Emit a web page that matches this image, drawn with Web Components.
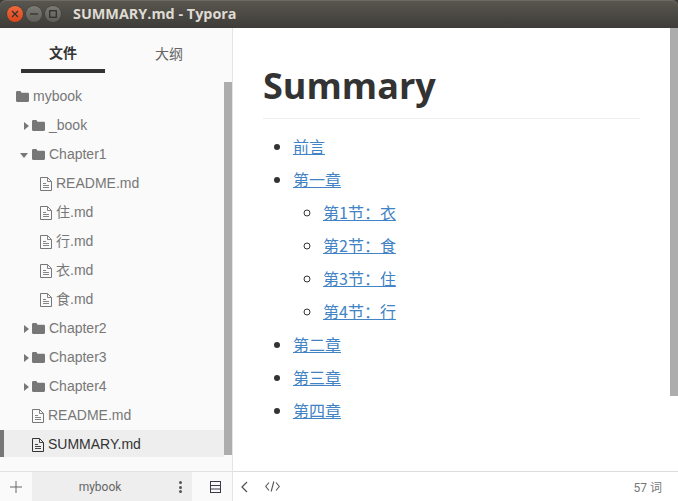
<!DOCTYPE html>
<html><head><meta charset="utf-8">
<style>
html,body{margin:0;height:100%;background:#3c3b37;overflow:hidden}
body{display:flex;flex-direction:column;width:678px;height:501px;font-family:"Liberation Sans","Noto Sans CJK SC",sans-serif}
</style></head>
<body>
<win-titlebar>SUMMARY.md - Typora</win-titlebar>
<app-main>
  <file-sidebar slot="side">
    <tree-row level="0" icon="folder">mybook</tree-row>
    <tree-row level="1" icon="folder" arrow="right">_book</tree-row>
    <tree-row level="1" icon="folder" arrow="down">Chapter1</tree-row>
    <tree-row level="2" icon="file">README.md</tree-row>
    <tree-row level="2" icon="file">住.md</tree-row>
    <tree-row level="2" icon="file">行.md</tree-row>
    <tree-row level="2" icon="file">衣.md</tree-row>
    <tree-row level="2" icon="file">食.md</tree-row>
    <tree-row level="1" icon="folder" arrow="right">Chapter2</tree-row>
    <tree-row level="1" icon="folder" arrow="right">Chapter3</tree-row>
    <tree-row level="1" icon="folder" arrow="right">Chapter4</tree-row>
    <tree-row level="1" icon="file">README.md</tree-row>
    <tree-row level="1" icon="file" active>SUMMARY.md</tree-row>
  </file-sidebar>
  <md-doc slot="doc"></md-doc>
</app-main>
<script>
function def(name, css, html, init){
  customElements.define(name, class extends HTMLElement{
    connectedCallback(){
      if(this.shadowRoot) return;
      const r=this.attachShadow({mode:'open'});
      r.innerHTML='<style>'+css+'</style>'+(typeof html==='function'?html(this):html);
    }
  });
}
def('win-titlebar',`
:host{display:flex;align-items:center;height:28px;flex:none;box-sizing:border-box;padding-left:7px;border-radius:6px 6px 0 0;
background:linear-gradient(#5a5750,#3d3c38);color:#dfdbd2;font:700 14.4px/28px "Open Sans",sans-serif;box-shadow:inset 0 1px 0 #6d6a63}
.b{width:16px;height:16px;border-radius:50%;margin-right:3px;display:flex;align-items:center;justify-content:center;background:linear-gradient(#7b7a74,#5f5e58);box-shadow:0 0 0 .5px #3a3935}
.c{background:linear-gradient(#f0693c,#d9451b)}
svg{width:8px;height:8px;fill:none;stroke:#33322e;stroke-width:1.3}
.t{margin-left:9px;white-space:nowrap}`,
`<div class="b c"><svg viewBox="0 0 8 8"><path d="M1 1l6 6M7 1L1 7"/></svg></div>
<div class="b"><svg viewBox="0 0 8 8"><path d="M0 4h8"/></svg></div>
<div class="b"><svg viewBox="0 0 8 8"><rect x=".7" y=".7" width="6.6" height="6.6"/></svg></div>
<div class="t"><slot></slot></div>`);

def('app-main',`
:host{display:flex;flex:1;min-height:0;background:#fff}`,
`<slot name="side"></slot><slot name="doc"></slot>`);

def('file-sidebar',`
:host{display:flex;flex-direction:column;position:relative;width:232px;flex:none;background:#fafafa;border-right:1px solid #e4e4e4;color:#777}
.tabs{display:flex;height:54px;box-sizing:border-box;padding-left:21px;flex:none}
.tab{width:84px;height:45px;box-sizing:border-box;display:flex;align-items:center;justify-content:center;padding-top:7px;font:14px "Noto Sans CJK SC",sans-serif;color:#666}
.tab.on{font-weight:700;color:#333;border-bottom:4px solid #333;padding-top:7px}
.tab+.tab{margin-left:22px;padding-top:6px;padding-bottom:1px}
.tree{flex:1;display:flex;flex-direction:column;gap:2px;min-height:0}
.sb{position:absolute;right:0;top:54px;width:8px;height:373px;background:#adadad}
.foot{display:flex;height:30px;box-sizing:border-box;flex:none;border-top:1px solid #e2e2e2;align-items:stretch;background:#fafafa}
.add{width:32px;display:flex;align-items:center;justify-content:center}
.name{width:160px;background:#eee;display:flex;align-items:center;position:relative;justify-content:center;font:12px "Roboto",sans-serif;color:#666;padding-right:24px;box-sizing:border-box}
.dots{position:absolute;right:10px;top:9px;width:4px;height:12px;display:flex;flex-direction:column;justify-content:space-between;align-items:center}
.dots i{width:3px;height:3px;border-radius:50%;background:#555;display:block;flex:none}
.list{flex:1;display:flex;align-items:center;justify-content:center;padding-left:6px}
svg{display:block}`,
`<div class="tabs"><div class="tab on">文件</div><div class="tab">大纲</div></div>
<div class="tree"><slot></slot></div>
<div class="sb"></div>
<div class="foot">
<div class="add"><svg width="12" height="12" viewBox="0 0 12 12" fill="none" stroke="#666" stroke-width="1"><path d="M6 0v12M0 6h12"/></svg></div>
<div class="name">mybook<div class="dots"><i></i><i></i><i></i></div></div>
<div class="list"><svg width="11" height="12" viewBox="0 0 11 12" fill="none" stroke="#3a3a4a" stroke-width="1"><rect x=".5" y=".5" width="10" height="11"/><path d="M.5 4.5h10M.5 8h10"/></svg></div>
</div>`);

const FOLDER='<svg width="13" height="11" viewBox="0 0 13 11"><path fill="#777" d="M0 1.5C0 .7.5 0 1.2 0h2.6c.7 0 1 .3 1.2.8l.4.9h6.4c.7 0 1.2.5 1.2 1.1v7c0 .7-.5 1.2-1.2 1.2H1.2C.5 11 0 10.500 0 9.800z"/></svg>';
const FILE=c=>`<svg width="12" height="14" viewBox="0 0 12 14" fill="none" stroke="${c}" stroke-width="1"><path d="M.5.5h7l4 4v9H.5z"/><path d="M7.500.5v4h4M3 6.500h3M3 8.500h6M3 10.500h6" stroke-width=".9"/></svg>`;
def('tree-row',`
:host{display:flex;align-items:center;position:relative;height:27px;width:224px;box-sizing:border-box;padding-top:2px;font:14px/25px "Liberation Sans","Noto Sans CJK SC",sans-serif;color:#777;white-space:nowrap;flex:none}
:host([active]){background:#eee;color:#333;box-shadow:inset 4px 0 0 #777}
:host([level="0"]){padding-left:16px}
:host([level="1"]){padding-left:32px}
:host([level="2"]){padding-left:40px}
.t{margin-left:4px}
.fo{margin-left:4px}
svg{display:block;flex:none}
.ar{position:absolute;width:0;height:0}
.ar.right{left:24px;top:11px;border-left:5px solid #777;border-top:4.5px solid transparent;border-bottom:4.5px solid transparent}
.ar.down{left:20px;top:13px;border-top:5px solid #777;border-left:4px solid transparent;border-right:4px solid transparent}`,
el=>{
  const a=el.getAttribute('arrow'), fo=el.getAttribute('icon')==='folder';
  return (a?`<span class="ar ${a}"></span>`:'')+(fo?FOLDER:FILE(el.hasAttribute('active')?'#333':'#777'))+`<span class="t${fo?' fo':''}"><slot></slot></span>`;
});

def('md-doc',`
:host{display:flex;flex-direction:column;flex:1;min-width:0;position:relative;background:#fff;color:#333}
.page{flex:1;min-height:0;padding:0 38px 0 30px;overflow:hidden;font:16px/33px "Noto Sans CJK SC","Open Sans",sans-serif}
h1{margin:0;height:91px;box-sizing:border-box;padding-top:32px;border-bottom:1px solid #eee;font:700 36px/52px "Open Sans",sans-serif;color:#333}
ul{margin:0;padding-left:30px;list-style:disc}
.page>ul{margin-top:11px}
ul ul{list-style:circle}
li{line-height:33px;height:auto}
a{color:#4183c4;text-decoration:underline}
.sb{position:absolute;right:0;top:0;width:8px;height:368px;background:#adadad}
.bar{height:30px;box-sizing:border-box;flex:none;border-top:1px solid #ddd;display:flex;align-items:center;padding:0 16px 0 8px;font:12px "Roboto","Noto Sans CJK SC",sans-serif;color:#777}
.code{margin-left:17px}
.wc{margin-left:auto;font-size:12px}
svg{display:block}`,
`<div class="page"><h1>Summary</h1>
<ul><li><a>前言</a></li>
<li><a>第一章</a>
  <ul><li><a>第1节：衣</a></li><li><a>第2节：食</a></li><li><a>第3节：住</a></li><li><a>第4节：行</a></li></ul></li>
<li><a>第二章</a></li><li><a>第三章</a></li><li><a>第四章</a></li></ul></div>
<div class="sb"></div>
<div class="bar">
<svg width="7" height="12" viewBox="0 0 7 12" fill="none" stroke="#555" stroke-width="1.3"><path d="M6 1L1 6l5 5"/></svg>
<svg class="code" width="15" height="11" viewBox="0 0 15 11" fill="none" stroke="#555" stroke-width="1.1"><path d="M4 1.5L.7 5.5 4 9.5M11 1.5l3.3 4-3.3 4M8.8.5l-2.6 10"/></svg>
<span class="wc">57 词</span></div>`);
</script>
</body></html>
